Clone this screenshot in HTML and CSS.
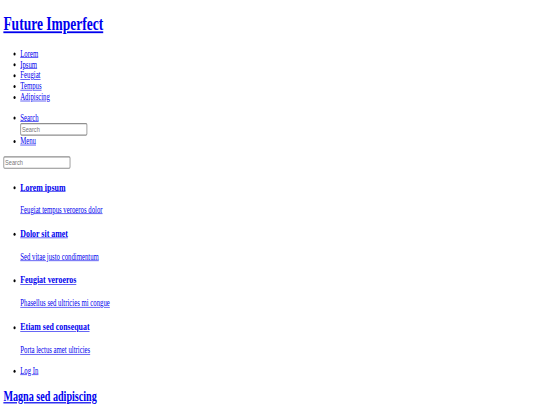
FILE: index.html
```html
<!DOCTYPE html>
<html>
<head>
<meta charset="utf-8">
<title>Future Imperfect</title>
<link rel="stylesheet" href="styles.css">
</head>
<body>
<div class="viewport">
<div class="page">
  <header class="site-header">
    <h1><a href="#">Future Imperfect</a></h1>
    <nav class="links">
      <ul>
        <li><a href="#">Lorem</a></li>
        <li><a href="#">Ipsum</a></li>
        <li><a href="#">Feugiat</a></li>
        <li><a href="#">Tempus</a></li>
        <li><a href="#">Adipiscing</a></li>
      </ul>
    </nav>
    <nav class="main">
      <ul>
        <li class="search">
          <a href="#search">Search</a>
          <form class="search-form"><input type="text" name="query" placeholder="Search"></form>
        </li>
        <li class="menu"><a href="#menu">Menu</a></li>
      </ul>
    </nav>
  </header>
  <section class="side-menu">
    <section>
      <form class="search-form"><input type="text" name="query" placeholder="Search"></form>
    </section>
    <section>
      <ul class="menu-links">
        <li><a href="#"><h3>Lorem ipsum</h3><p>Feugiat tempus veroeros dolor</p></a></li>
        <li><a href="#"><h3>Dolor sit amet</h3><p>Sed vitae justo condimentum</p></a></li>
        <li><a href="#"><h3>Feugiat veroeros</h3><p>Phasellus sed ultricies mi congue</p></a></li>
        <li><a href="#"><h3>Etiam sed consequat</h3><p>Porta lectus amet ultricies</p></a></li>
      </ul>
    </section>
    <section>
      <ul class="actions">
        <li><a href="#">Log In</a></li>
      </ul>
    </section>
  </section>
  <div class="main-content">
    <article class="post">
      <header>
        <div class="title">
          <h2><a href="#">Magna sed adipiscing</a></h2>
        </div>
      </header>
    </article>
  </div>
</div>
</div>
</body>
</html>
```
FILE: styles.css
```css
html, body {
  margin: 0;
  padding: 0;
  background: #ffffff;
  overflow: hidden;
}
body {
  font-family: "Liberation Serif", "Times New Roman", serif;
  font-size: 16px;
  color: #000000;
}
.viewport {
  width: 540px;
  height: 405px;
  overflow: hidden;
}
.page {
  display: flow-root;
  width: 1264px;
  padding: 0 8px;
  transform: scale(0.421875, 0.603);
  transform-origin: 0 0;
}
a {
  color: #0000ee;
}
.search-form {
  margin: 0;
}
input {
  box-sizing: border-box;
  width: 159px;
  height: 21px;
  margin: 0;
  padding: 1px 2px;
  border: 2px solid #8f8f8f;
  border-radius: 3px;
  font-family: "Liberation Sans", Arial, sans-serif;
  font-size: 13.333px;
  color: #000000;
  background: #ffffff;
}
input::placeholder {
  color: #757575;
}
.main-content h2 {
  margin-bottom: 0;
}
```
